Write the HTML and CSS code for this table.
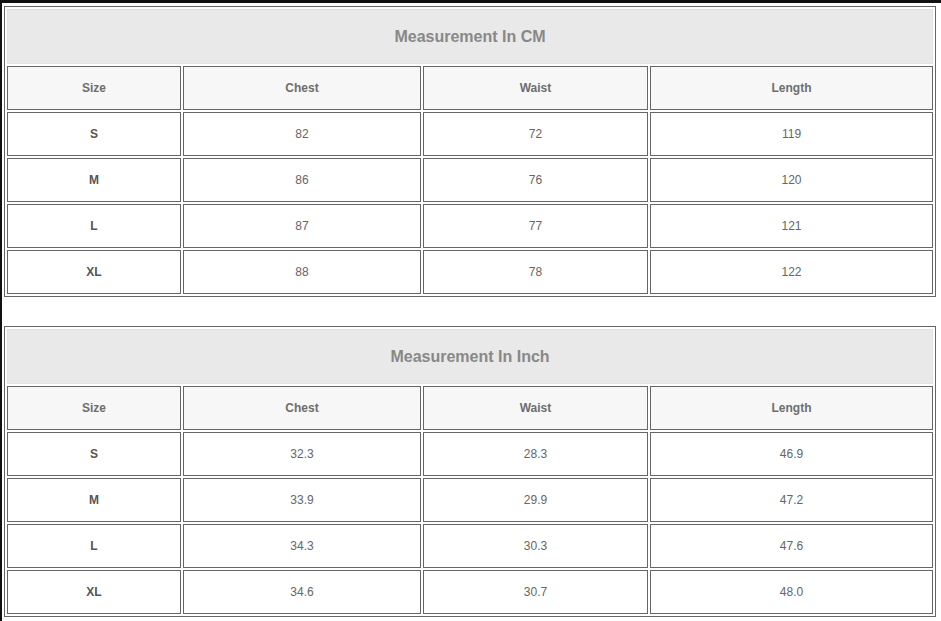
FILE: index.html
```html
<!DOCTYPE html>
<html>
<head>
<meta charset="utf-8">
<link rel="stylesheet" href="styles.css">
</head>
<body>
<div class="frame">
  <table class="size-table">
    <colgroup>
      <col class="c1"><col class="c2"><col class="c3"><col class="c4">
    </colgroup>
    <tr><td class="title" colspan="4">Measurement In CM</td></tr>
    <tr class="head"><td>Size</td><td>Chest</td><td>Waist</td><td>Length</td></tr>
    <tr><td class="sz">S</td><td>82</td><td>72</td><td>119</td></tr>
    <tr><td class="sz">M</td><td>86</td><td>76</td><td>120</td></tr>
    <tr><td class="sz">L</td><td>87</td><td>77</td><td>121</td></tr>
    <tr><td class="sz">XL</td><td>88</td><td>78</td><td>122</td></tr>
  </table>
  <table class="size-table second">
    <colgroup>
      <col class="c1"><col class="c2"><col class="c3"><col class="c4">
    </colgroup>
    <tr><td class="title" colspan="4">Measurement In Inch</td></tr>
    <tr class="head"><td>Size</td><td>Chest</td><td>Waist</td><td>Length</td></tr>
    <tr><td class="sz">S</td><td>32.3</td><td>28.3</td><td>46.9</td></tr>
    <tr><td class="sz">M</td><td>33.9</td><td>29.9</td><td>47.2</td></tr>
    <tr><td class="sz">L</td><td>34.3</td><td>30.3</td><td>47.6</td></tr>
    <tr><td class="sz">XL</td><td>34.6</td><td>30.7</td><td>48.0</td></tr>
  </table>
</div>
</body>
</html>
```
FILE: styles.css
```css
html, body {
  margin: 0;
  padding: 0;
  background: #ffffff;
}
body {
  font-family: "Liberation Sans", Arial, sans-serif;
}
.frame {
  border-top: 3px solid #111111;
  border-left: 2px solid #111111;
  padding: 3px 0 0 2px;
  min-height: 621px;
  box-sizing: border-box;
}
.size-table {
  width: 932px;
  table-layout: fixed;
  border-collapse: separate;
  border-spacing: 2px;
  border: 1px solid #666666;
}
.size-table.second {
  margin-top: 29px;
}
.c1 { width: 174px; }
.c2 { width: 238px; }
.c3 { width: 225px; }
.c4 { width: 283px; }
.size-table td {
  border: 1px solid #666666;
  padding: 0;
  height: 42px;
  text-align: center;
  vertical-align: middle;
  font-size: 12px;
  color: #666666;
  background: #ffffff;
}
.size-table td.title {
  height: 53px;
  background: #e9e9e9;
  border: 1px solid #e2e2e2;
  font-size: 16px;
  font-weight: bold;
  color: #888888;
}
.size-table .head td {
  background: #f7f7f7;
  font-weight: bold;
  color: #6e6e6e;
}
.size-table td.sz {
  font-weight: bold;
  color: #555555;
}
```
